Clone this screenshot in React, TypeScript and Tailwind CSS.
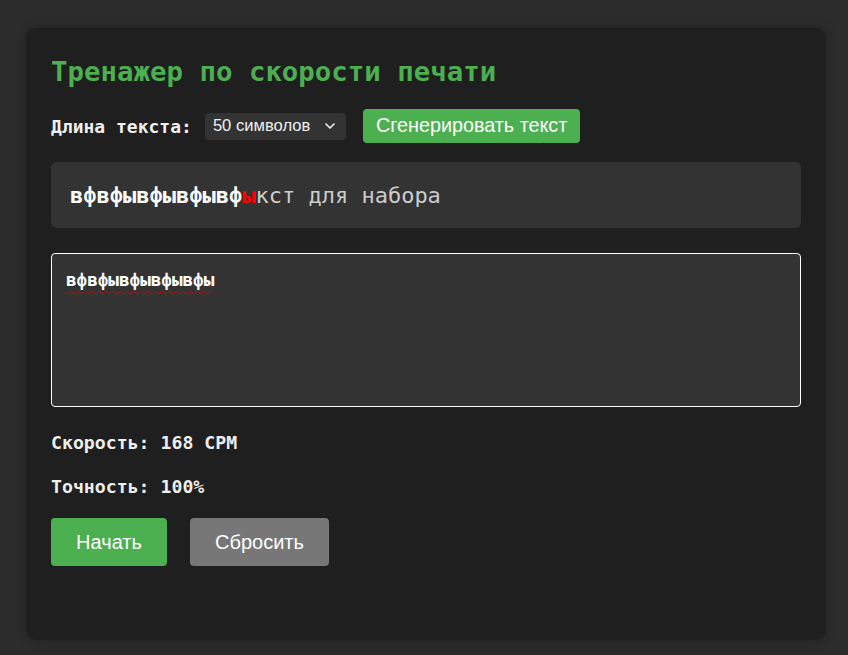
import { ChevronDown } from 'lucide-react'

const mono = "font-['DejaVu_Sans_Mono',monospace]"
const sans = "font-['Liberation_Sans',Arial,sans-serif]"

const App = () => {
    return (
        <div className="min-h-[655px] w-[848px] bg-[#2c2c2c] pt-[28px] pl-[26px] pb-[15px]">
            <div className="w-[800px] h-[612px] rounded-[10px] bg-[#1f1f1f] px-[25px] pt-[25px] shadow-[0_0_12px_rgba(0,0,0,0.25)]">
                <h1 className={`${mono} text-[27.4px] font-bold leading-[34px] text-[#4caf50] mt-[2px]`}>
                    Тренажер по скорости печати
                </h1>

                <div className="flex items-center mt-[20px] h-[34px]">
                    <span className={`${mono} text-[18px] font-bold text-[#f0f0f0]`}>Длина текста:</span>
                    <div className={`${sans} ml-[13px] flex items-center h-[27px] w-[141px] rounded-[4px] bg-[#333333] pl-[8px] text-[16.6px] text-[#eeeeee]`}>
                        <span>50 символов</span>
                        <ChevronDown className="ml-auto mr-[8px] w-[16px] h-[16px]" strokeWidth={2.5} />
                    </div>
                    <button className={`${sans} ml-[17px] h-[34px] rounded-[4px] bg-[#4caf50] px-[13px] text-[19.8px] text-white`}>
                        Сгенерировать текст
                    </button>
                </div>

                <div className={`${mono} mt-[19px] h-[66px] rounded-[6px] bg-[#333333] px-[19px] flex items-center text-[22px]`}>
                    <span className="font-bold text-white">вфвфывфывфывф</span>
                    <span className="font-bold text-[#ff0000]">ы</span>
                    <span className="text-[#cccccc]">кст для набора</span>
                </div>

                <div className="mt-[25px] h-[154px] rounded-[4px] border border-white bg-[#333333] px-[14px] pt-[13px]">
                    <span className={`${mono} text-[17.6px] font-bold text-white underline decoration-wavy decoration-[#e00000] decoration-1 underline-offset-[4px]`}>
                        вфвфывфывфывфы
                    </span>
                </div>

                <p className={`${mono} mt-[24px] text-[18.2px] font-bold text-[#eeeeee] leading-[24px]`}>Скорость: 168 CPM</p>
                <p className={`${mono} mt-[20px] text-[18.2px] font-bold text-[#eeeeee] leading-[24px]`}>Точность: 100%</p>

                <div className="mt-[19px] flex gap-[23px]">
                    <button className={`${sans} h-[48px] w-[116px] rounded-[4px] bg-[#4caf50] text-[20px] text-white`}>Начать</button>
                    <button className={`${sans} h-[48px] w-[139px] rounded-[4px] bg-[#777777] text-[20px] text-white`}>Сбросить</button>
                </div>
            </div>
        </div>
    )
}

export default App
